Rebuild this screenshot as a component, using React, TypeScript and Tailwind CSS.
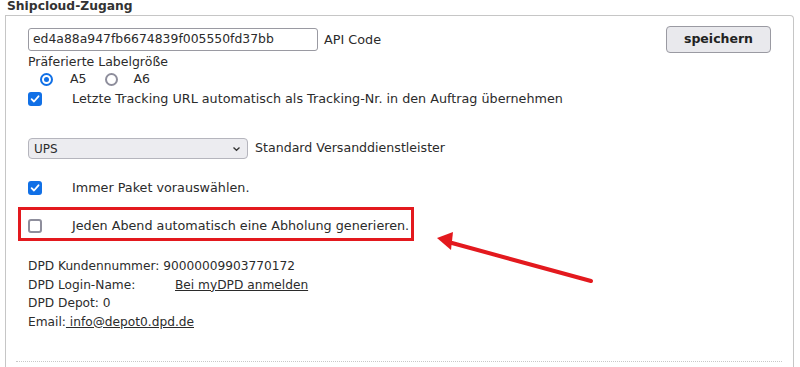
import React from 'react'

const font = { fontFamily: '"DejaVu Sans", Verdana, sans-serif' }

function Check({ on }: { on?: boolean }) {
  return on ? (
    <span className="flex h-[14px] w-[14px] shrink-0 items-center justify-center rounded-[3px] bg-[#1170e6]">
      <svg width="10" height="10" viewBox="0 0 10 10">
        <path d="M1.6 5.2 L4 7.5 L8.5 2.3" fill="none" stroke="white" strokeWidth="1.8" strokeLinecap="round" strokeLinejoin="round" />
      </svg>
    </span>
  ) : (
    <span className="h-[14px] w-[14px] shrink-0 rounded-[3px] border-2 border-[#8e8e9c] bg-white" />
  )
}

function Radio({ on }: { on?: boolean }) {
  return on ? (
    <span className="flex h-[13px] w-[13px] shrink-0 items-center justify-center rounded-full border-2 border-[#1170e6] bg-white">
      <span className="h-[5px] w-[5px] rounded-full bg-[#1170e6]" />
    </span>
  ) : (
    <span className="block h-[13px] w-[13px] shrink-0 rounded-full border-2 border-[#8e8e9c] bg-white" />
  )
}

function CheckRow({ on, label, className }: { on?: boolean; label: string; className?: string }) {
  return (
    <div className={'flex h-[18px] items-center ' + (className ?? '')}>
      <Check on={on} />
      <span className="ml-[30px] text-[12.75px]">{label}</span>
    </div>
  )
}

export default function App() {
  return (
    <div className="relative h-[367px] w-[800px] overflow-hidden bg-white text-[12px] text-[#2b2b2b]" style={font}>
      {/* Legend */}
      <div className="h-[15px] pl-[7px] text-[12.3px] font-bold leading-[13px] text-[#333]">Shipcloud-Zugang</div>

      {/* Box */}
      <div className="ml-[5px] w-[789px] rounded-tr-[4px] border-x border-t border-[#c6c6c6] pb-[8px]">
        <div className="pl-[22px] pr-[22px]">
          <div className="mt-[10px] flex h-[27px] items-center">
            <div className="flex h-[23px] w-[290px] items-center rounded-[3px] border border-[#9a9aa2] px-[4px] text-[12.4px]">
              ed4a88a947fb6674839f005550fd37bb
            </div>
            <span className="ml-[6px] text-[12.8px]">API Code</span>
            <button className="ml-auto h-[27px] w-[105px] rounded-[4px] border border-[#9a9aa2] bg-[#e9e9ed] text-[12.5px] font-bold text-[#222]">
              speichern
            </button>
          </div>

          <div className="mt-[1px] flex h-4 items-center text-[12.5px]">Präferierte Labelgröße</div>

          <div className="flex h-[18px] items-center pl-[12px] text-[12.5px]">
            <Radio on />
            <span className="ml-[17px]">A5</span>
            <span className="ml-[18px]">
              <Radio />
            </span>
            <span className="ml-[16px]">A6</span>
          </div>

          <CheckRow on className="mt-[2px]" label="Letzte Tracking URL automatisch als Tracking-Nr. in den Auftrag übernehmen" />

          <div className="mt-[30px] flex h-[21px] items-center">
            <div className="flex h-[21px] w-[220px] items-center justify-between rounded-[4px] border border-[#b5b5bd] bg-[#ececf0] pl-[5px] pr-[6px]">
              <span>UPS</span>
              <svg width="9" height="6" viewBox="0 0 9 6">
                <path d="M1.5 1.5 L4.5 4.3 L7.5 1.5" fill="none" stroke="#333" strokeWidth="1.3" />
              </svg>
            </div>
            <span className="ml-[7px] text-[12.6px]">Standard Versanddienstleister</span>
          </div>

          <CheckRow on className="mt-[20px]" label="Immer Paket vorauswählen." />

          <div className="relative mt-[20px]">
            <CheckRow label="Jeden Abend automatisch eine Abholung generieren." />
            <span className="pointer-events-none absolute left-[-10px] top-[-10px] h-[34px] w-[396px] border-[3px] border-[#e3191e]" />
          </div>

          <div className="mt-[22px] text-[12.2px] leading-[18.5px]">
            <div>DPD Kundennummer: 90000009903770172</div>
            <div className="flex">
              <span className="w-[147px]">DPD Login-Name:</span>
              <a className="underline">Bei myDPD anmelden</a>
            </div>
            <div>DPD Depot: 0</div>
            <div>
              Email:<a className="underline"> info@depot0.dpd.de</a>
            </div>
          </div>
        </div>

        <div className="ml-[10px] mr-[11px] mt-[30px] border-t border-dotted border-[#c8c8c8]" />
      </div>

      {/* Annotation arrow */}
      <svg className="pointer-events-none absolute left-0 top-0" width="800" height="367">
        <line x1="591" y1="281" x2="452" y2="243" stroke="#e3191e" strokeWidth="4" strokeLinecap="round" />
        <polygon points="437,238 453,232 451,250" fill="#e3191e" />
      </svg>
    </div>
  )
}
